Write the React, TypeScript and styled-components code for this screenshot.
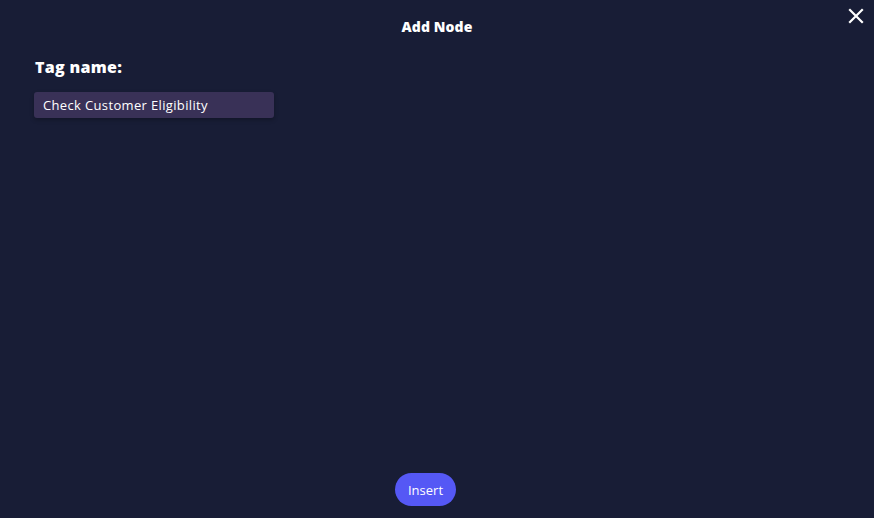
import React from "react";
import styled, { createGlobalStyle } from "styled-components";

const Global = createGlobalStyle`
  html, body { margin: 0; padding: 0; background: #181d36; }
  body { font-family: "Open Sans", "Noto Sans", sans-serif; }
  * { box-sizing: border-box; }
`;

const Modal = styled.div`
  position: relative;
  width: 874px;
  height: 518px;
  background: #181d36;
  display: flex;
  flex-direction: column;
  color: #ffffff;
`;

const Title = styled.h2`
  margin: 0;
  padding-top: 17px;
  height: 52px;
  text-align: center;
  font-size: 14px;
  font-weight: 800;
  letter-spacing: 0.1px;
  color: #ffffff;
`;

const CloseButton = styled.button`
  position: absolute;
  top: 7px;
  right: 9px;
  width: 18px;
  height: 18px;
  padding: 0;
  border: none;
  background: transparent;
  cursor: pointer;
  display: flex;
  align-items: center;
  justify-content: center;
`;

const Body = styled.div`
  flex: 1;
  padding: 4px 34px 0;
  display: flex;
  flex-direction: column;
`;

const Label = styled.label`
  font-size: 16px;
  font-weight: 800;
  letter-spacing: 0.3px;
  color: #ffffff;
  margin-bottom: 14px;
  line-height: 22px;
  padding-left: 1px;
`;

const Input = styled.input`
  width: 240px;
  height: 26px;
  border: none;
  border-radius: 3px;
  background: #393157;
  color: #ffffff;
  padding: 0 9px;
  font-family: inherit;
  font-size: 13px;
  letter-spacing: 0.35px;
  outline: none;
  box-shadow: 0 2px 4px rgba(0, 0, 0, 0.25);
`;

const Footer = styled.div`
  display: flex;
  justify-content: center;
  padding: 0 23px 12px 0;
`;

const PrimaryButton = styled.button`
  width: 61px;
  height: 33px;
  border: none;
  border-radius: 17px;
  background: #5558f5;
  color: #ffffff;
  font-family: inherit;
  font-size: 13px;
  cursor: pointer;
`;

export default function App() {
  return (
    <>
      <Global />
      <Modal>
        <Title>Add Node</Title>
        <CloseButton aria-label="Close">
          <svg width="16" height="16" viewBox="0 0 16 16">
            <path d="M2 2 L14 14 M14 2 L2 14" stroke="#ffffff" strokeWidth="2.2" strokeLinecap="square" />
          </svg>
        </CloseButton>
        <Body>
          <Label>Tag name:</Label>
          <Input defaultValue="Check Customer Eligibility" />
        </Body>
        <Footer>
          <PrimaryButton>Insert</PrimaryButton>
        </Footer>
      </Modal>
    </>
  );
}
